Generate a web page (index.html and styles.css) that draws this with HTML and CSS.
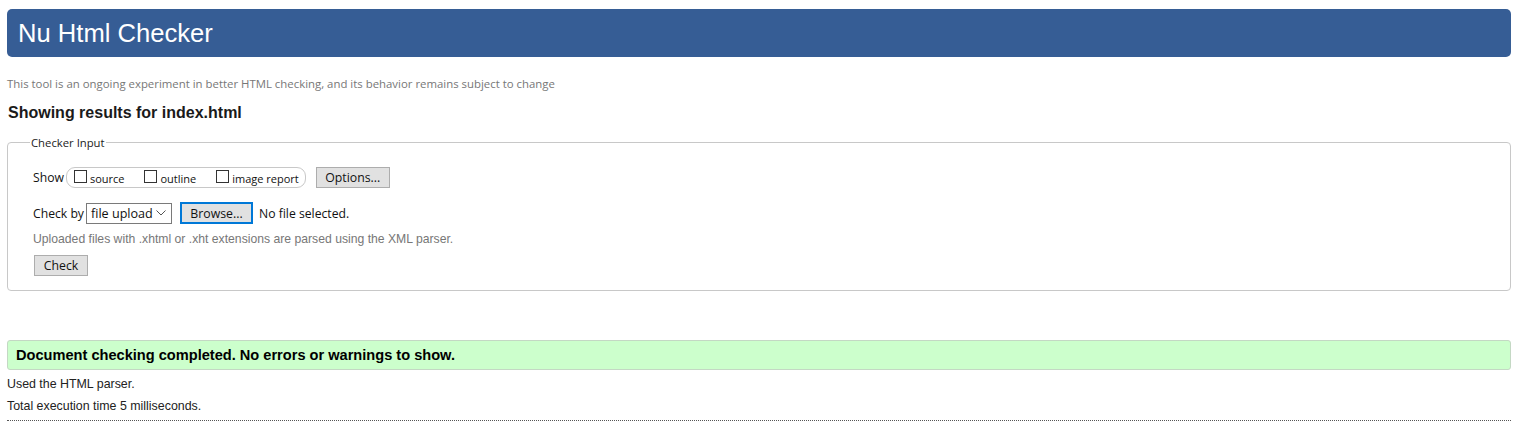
FILE: index.html
```html
<!DOCTYPE html>
<html lang="en">
<head>
<meta charset="utf-8">
<title>Showing results for index.html - Nu Html Checker</title>
<link rel="stylesheet" href="styles.css">
</head>
<body>
<h1 class="title">Nu Html Checker</h1>
<p class="intro">This tool is an ongoing experiment in better HTML checking, and its behavior remains subject to change</p>
<h2 class="results-for">Showing results for index.html</h2>
<fieldset class="input-box">
  <legend class="legend">Checker Input</legend>
  <div class="row show-row">
    <span class="ui">Show</span>
    <span class="pill">
      <label class="opt"><span class="box"></span>source</label>
      <label class="opt"><span class="box"></span>outline</label>
      <label class="opt"><span class="box"></span>image report</label>
    </span>
    <button class="btn options">Options...</button>
  </div>
  <div class="row check-row">
    <span class="ui">Check by</span>
    <span class="select"><span class="select-text">file upload</span><svg class="chev" width="10" height="6" viewBox="0 0 10 6"><path d="M0.5 0.5 L5 5 L9.5 0.5" fill="none" stroke="#555" stroke-width="1"/></svg></span>
    <button class="btn browse">Browse...</button>
    <span class="ui nofile">No file selected.</span>
  </div>
  <p class="hint">Uploaded files with .xhtml or .xht extensions are parsed using the XML parser.</p>
  <button class="btn check">Check</button>
</fieldset>
<p class="success">Document checking completed. No errors or warnings to show.</p>
<p class="detail">Used the HTML parser.</p>
<p class="detail">Total execution time 5 milliseconds.</p>
<hr class="sep">
</body>
</html>
```
FILE: styles.css
```css
html, body { margin: 0; padding: 0; background: #fff; }
body {
  padding: 9px 8px 0 7px;
  font-family: "Liberation Sans", Arial, sans-serif;
  color: #222;
}
.title {
  margin: 0;
  height: 48px;
  box-sizing: border-box;
  padding: 6px 11px 0;
  background: #365d95;
  color: #fff;
  border-radius: 5px;
  font-weight: normal;
  font-size: 25.6px;
  line-height: 36px;
}
.intro {
  margin: 19px 0 0 0;
  font-family: "Open Sans", "Noto Sans", sans-serif;
  font-size: 11.4px;
  line-height: 16px;
  color: #777;
}
.results-for {
  margin: 11px 0 0 1px;
  font-size: 16px;
  line-height: 20px;
  font-weight: bold;
  color: #1a1a1a;
}
.input-box {
  margin: 12px 0 0 0;
  padding: 13px 25px 14px 25px;
  border: 1px solid #c8c8c8;
  border-radius: 4px;
  min-width: 0;
}
.legend {
  padding: 0 1px;
  margin-left: -3px;
  font-family: "Open Sans", "Noto Sans", sans-serif;
  font-size: 11.3px;
  color: #222;
}
.ui {
  font-family: "Open Sans", "Noto Sans", sans-serif;
  font-size: 12.2px;
  color: #111;
  white-space: nowrap;
}
.row { display: flex; align-items: center; }
.show-row { height: 22px; margin-top: 3px; }
.pill {
  display: flex;
  align-items: center;
  height: 21px;
  box-sizing: border-box;
  margin-left: 2px;
  padding: 0 6px 0 7px;
  border: 1px solid #c8c8c8;
  border-radius: 9px;
  gap: 20px;
}
.opt {
  display: flex;
  align-items: center;
  font-family: "Open Sans", "Noto Sans", sans-serif;
  font-size: 11px;
  color: #111;
  padding-top: 2px;
  white-space: nowrap;
}
.box {
  width: 13px;
  height: 13px;
  box-sizing: border-box;
  border: 1px solid #333;
  margin-right: 3px;
  margin-top: -4px;
  background: #fff;
}
.btn {
  font-family: "Open Sans", "Noto Sans", sans-serif;
  font-size: 12.3px;
  color: #111;
  background: #e1e1e1;
  border: 1px solid #adadad;
  border-radius: 0;
  padding: 0;
  box-sizing: border-box;
  white-space: nowrap;
}
.options { width: 74px; height: 21px; margin-left: 10px; }
.check-row { height: 22px; margin-top: 14px; }
.select {
  display: flex;
  align-items: center;
  justify-content: space-between;
  flex: none;
  width: 86px;
  height: 21px;
  box-sizing: border-box;
  margin-left: 2px;
  padding: 0 5px 0 4px;
  border: 1px solid #7a7a7a;
  background: #fff;
}
.select-text {
  font-family: "Open Sans", "Noto Sans", sans-serif;
  font-size: 12.6px;
  color: #111;
  white-space: nowrap;
}
.chev { flex: none; }
.browse {
  width: 73px;
  height: 22px;
  margin-left: 8px;
  border: 2px solid #0078d7;
}
.nofile { margin-left: 6px; }
.hint {
  margin: 7px 0 0 0;
  font-size: 12.2px;
  line-height: 16px;
  color: #777;
}
.check {
  display: block;
  width: 54px;
  height: 21px;
  margin: 8px 0 0 1px;
}
.success {
  margin: 49px 0 0 0;
  height: 30px;
  box-sizing: border-box;
  padding: 0 8px;
  background: #ccffcc;
  border: 1px solid #c4d8c4;
  border-radius: 3px;
  font-weight: bold;
  font-size: 14.6px;
  line-height: 28px;
  color: #000;
}
.detail {
  margin: 6px 0 0 0;
  font-size: 12.4px;
  line-height: 16px;
  color: #222;
}
.detail + .detail { margin-top: 6px; }
.sep {
  margin: 6px 0 0 0;
  border: 0;
  border-top: 1px dotted #555;
  height: 0;
}
```
